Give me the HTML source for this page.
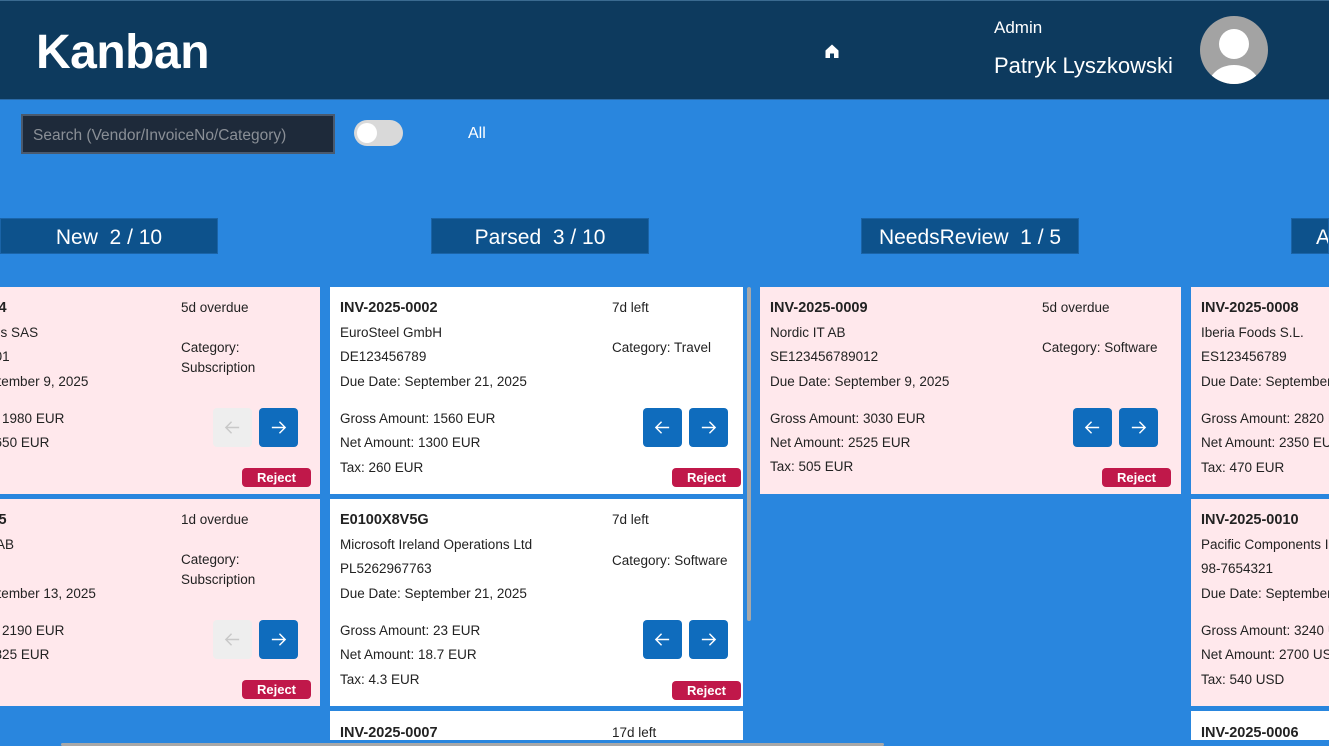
<!DOCTYPE html>
<html><head><meta charset="utf-8"><style>
*{box-sizing:border-box;margin:0;padding:0}
html,body{width:1329px;height:746px;overflow:hidden}
body{background:#2986de;font-family:"Liberation Sans",sans-serif;position:relative;color:#222}
.top{position:absolute;left:0;top:0;width:1329px;height:100px;background:#0d3a5e;border-top:1px solid #3a6a90;border-bottom:1px solid #2a6aa8}
.a{position:absolute;white-space:nowrap}
.search{position:absolute;left:21px;top:114px;width:314px;height:40px;background:#1e2a3a;border:2px solid #4a5a6e;color:#8a8f96;font-size:15.5px;padding:11px 10px;white-space:nowrap}
.tog{position:absolute;left:354px;top:120px;width:49px;height:26px;border-radius:13px;background:#d9d9d9}
.tog:after{content:"";position:absolute;left:3px;top:3px;width:20px;height:20px;border-radius:50%;background:#fff}
.hd{position:absolute;top:218px;width:218px;height:36px;background:#0d528c;border:1px solid #1a64a8;color:#fff;font-size:21px;text-align:center;line-height:38px;white-space:nowrap;overflow:hidden}
.card{position:absolute;width:413px;height:207px;background:#fff;overflow:hidden;font-size:13.5px}
.pink{background:#ffe8ec}
.card .l{position:absolute;left:10px;white-space:nowrap;line-height:22px}
.card .r{position:absolute;left:282px;white-space:nowrap;line-height:22px}
.card .t{font-weight:bold;font-size:14.5px}
.btn{position:absolute;top:121px;width:39px;height:39px;border-radius:4px;background:#0f6cbd}
.btn svg{position:absolute;left:10px;top:10px}
.btn.dis{background:#eeeeee}
.rej{position:absolute;left:342px;top:181px;width:69px;height:19px;border-radius:4px;background:#c0184a;color:#fff;font-weight:bold;font-size:13px;text-align:center;line-height:19px}
</style></head><body>
<div class="top">
 <div class="a" style="left:36px;top:24px;font-size:48px;font-weight:bold;color:#fff;letter-spacing:-0.5px">Kanban</div>
 <svg class="a" style="left:824px;top:42px" width="16" height="16" viewBox="0 0 16 16"><path d="M8 1.5L1.5 7.5V15H6V10.5H10V15H14.5V7.5Z" fill="#fff"/></svg>
 <div class="a" style="left:994px;top:17px;font-size:17px;color:#fff">Admin</div>
 <div class="a" style="left:994px;top:52px;font-size:22px;color:#fff">Patryk Lyszkowski</div>
 <svg class="a" style="left:1199px;top:14px" width="70" height="70" viewBox="0 0 70 70"><circle cx="35" cy="35" r="34" fill="#a3a3a3"/><clipPath id="c"><circle cx="35" cy="35" r="34"/></clipPath><g clip-path="url(#c)" fill="#fff"><circle cx="35" cy="29" r="15"/><ellipse cx="35" cy="72" rx="26" ry="22"/></g></svg>
</div>
<div class="search">Search (Vendor/InvoiceNo/Category)</div>
<div class="tog"></div>
<div class="a" style="left:468px;top:125px;font-size:16px;color:#fff">All</div>

<div class="hd" style="left:0px">New&nbsp; 2 / 10</div>
<div class="hd" style="left:431px">Parsed&nbsp; 3 / 10</div>
<div class="hd" style="left:861px">NeedsReview&nbsp; 1 / 5</div>
<div class="hd" style="left:1291px;width:38px;text-align:left;padding-left:24px">Approved</div>

<!-- column 1 -->
<div class="card pink" style="left:-101px;top:287px;width:421px">
 <div class="l t" style="top:10px">INV-2025-0004</div><div class="l" style="top:35px">Global Solutions SAS</div><div class="l" style="top:59px">FR12345678901</div><div class="l" style="top:84px">Due Date: September 9, 2025</div>
 <div class="l" style="top:121px">Gross Amount: 1980 EUR</div><div class="l" style="top:145px">Net Amount: 1650 EUR</div>
 <div class="r" style="top:10px">5d overdue</div><div class="r" style="top:50px">Category:</div><div class="r" style="top:70px">Subscription</div>
 <div class="btn dis" style="left:314px"><svg width="19" height="19" viewBox="0 0 20 20"><path d="M17 10H3M9 4L3 10L9 16" stroke="#c8c8c8" stroke-width="1.5" fill="none"/></svg></div>
 <div class="btn" style="left:360px"><svg width="19" height="19" viewBox="0 0 20 20"><path d="M3 10H17M11 4L17 10L11 16" stroke="#fff" stroke-width="1.5" fill="none"/></svg></div>
 <div class="rej" style="left:343px">Reject</div>
</div>
<div class="card pink" style="left:-101px;top:499px;width:421px">
 <div class="l t" style="top:10px">INV-2025-0005</div><div class="l" style="top:35px">Nordic Supply AB</div><div class="l" style="top:84px">Due Date: September 13, 2025</div>
 <div class="l" style="top:121px">Gross Amount: 2190 EUR</div><div class="l" style="top:145px">Net Amount: 1825 EUR</div>
 <div class="r" style="top:10px">1d overdue</div><div class="r" style="top:50px">Category:</div><div class="r" style="top:70px">Subscription</div>
 <div class="btn dis" style="left:314px"><svg width="19" height="19" viewBox="0 0 20 20"><path d="M17 10H3M9 4L3 10L9 16" stroke="#c8c8c8" stroke-width="1.5" fill="none"/></svg></div>
 <div class="btn" style="left:360px"><svg width="19" height="19" viewBox="0 0 20 20"><path d="M3 10H17M11 4L17 10L11 16" stroke="#fff" stroke-width="1.5" fill="none"/></svg></div>
 <div class="rej" style="left:343px">Reject</div>
</div>

<!-- column 2 -->
<div class="card" style="left:330px;top:287px">
 <div class="l t" style="top:10px">INV-2025-0002</div><div class="l" style="top:35px">EuroSteel GmbH</div><div class="l" style="top:59px">DE123456789</div><div class="l" style="top:84px">Due Date: September 21, 2025</div>
 <div class="l" style="top:121px">Gross Amount: 1560 EUR</div><div class="l" style="top:145px">Net Amount: 1300 EUR</div><div class="l" style="top:170px">Tax: 260 EUR</div>
 <div class="r" style="top:10px">7d left</div><div class="r" style="top:50px">Category: Travel</div>
 <div class="btn" style="left:313px"><svg width="19" height="19" viewBox="0 0 20 20"><path d="M17 10H3M9 4L3 10L9 16" stroke="#fff" stroke-width="1.5" fill="none"/></svg></div>
 <div class="btn" style="left:359px"><svg width="19" height="19" viewBox="0 0 20 20"><path d="M3 10H17M11 4L17 10L11 16" stroke="#fff" stroke-width="1.5" fill="none"/></svg></div>
 <div class="rej">Reject</div>
</div>
<div class="card" style="left:330px;top:499px">
 <div class="l t" style="top:10px">E0100X8V5G</div><div class="l" style="top:35px">Microsoft Ireland Operations Ltd</div><div class="l" style="top:59px">PL5262967763</div><div class="l" style="top:84px">Due Date: September 21, 2025</div>
 <div class="l" style="top:121px">Gross Amount: 23 EUR</div><div class="l" style="top:145px">Net Amount: 18.7 EUR</div><div class="l" style="top:170px">Tax: 4.3 EUR</div>
 <div class="r" style="top:10px">7d left</div><div class="r" style="top:51px">Category: Software</div>
 <div class="btn" style="left:313px"><svg width="19" height="19" viewBox="0 0 20 20"><path d="M17 10H3M9 4L3 10L9 16" stroke="#fff" stroke-width="1.5" fill="none"/></svg></div>
 <div class="btn" style="left:359px"><svg width="19" height="19" viewBox="0 0 20 20"><path d="M3 10H17M11 4L17 10L11 16" stroke="#fff" stroke-width="1.5" fill="none"/></svg></div>
 <div class="rej" style="top:182px">Reject</div>
</div>
<div class="card" style="left:330px;top:711px;height:29px">
 <div class="l t" style="top:11px">INV-2025-0007</div><div class="r" style="top:11px">17d left</div>
</div>
<div class="a" style="left:746px;top:287px;width:6px;height:455px;background:#2986de"></div>
<div class="a" style="left:747px;top:287px;width:4px;height:334px;background:#a8a8a8;border-radius:2px"></div>

<!-- column 3 -->
<div class="card pink" style="left:760px;top:287px;width:421px">
 <div class="l t" style="top:10px">INV-2025-0009</div><div class="l" style="top:35px">Nordic IT AB</div><div class="l" style="top:59px">SE123456789012</div><div class="l" style="top:84px">Due Date: September 9, 2025</div>
 <div class="l" style="top:121px">Gross Amount: 3030 EUR</div><div class="l" style="top:145px">Net Amount: 2525 EUR</div><div class="l" style="top:169px">Tax: 505 EUR</div>
 <div class="r" style="top:10px">5d overdue</div><div class="r" style="top:50px">Category: Software</div>
 <div class="btn" style="left:313px"><svg width="19" height="19" viewBox="0 0 20 20"><path d="M17 10H3M9 4L3 10L9 16" stroke="#fff" stroke-width="1.5" fill="none"/></svg></div>
 <div class="btn" style="left:359px"><svg width="19" height="19" viewBox="0 0 20 20"><path d="M3 10H17M11 4L17 10L11 16" stroke="#fff" stroke-width="1.5" fill="none"/></svg></div>
 <div class="rej">Reject</div>
</div>

<!-- column 4 -->
<div class="card pink" style="left:1191px;top:287px;width:138px">
 <div class="l t" style="top:10px">INV-2025-0008</div><div class="l" style="top:35px">Iberia Foods S.L.</div><div class="l" style="top:59px">ES123456789</div><div class="l" style="top:84px">Due Date: September 15, 2025</div>
 <div class="l" style="top:121px">Gross Amount: 2820 EUR</div><div class="l" style="top:145px">Net Amount: 2350 EUR</div><div class="l" style="top:170px">Tax: 470 EUR</div>
</div>
<div class="card pink" style="left:1191px;top:499px;width:138px">
 <div class="l t" style="top:10px">INV-2025-0010</div><div class="l" style="top:35px">Pacific Components Inc</div><div class="l" style="top:59px">98-7654321</div><div class="l" style="top:84px">Due Date: September 12, 2025</div>
 <div class="l" style="top:121px">Gross Amount: 3240 USD</div><div class="l" style="top:145px">Net Amount: 2700 USD</div><div class="l" style="top:170px">Tax: 540 USD</div>
</div>
<div class="card" style="left:1191px;top:711px;height:29px;width:138px">
 <div class="l t" style="top:11px">INV-2025-0006</div>
</div>

<div class="a" style="left:61px;top:743px;width:823px;height:3px;background:#a8a8a8;border-radius:2px"></div>
</body></html>
